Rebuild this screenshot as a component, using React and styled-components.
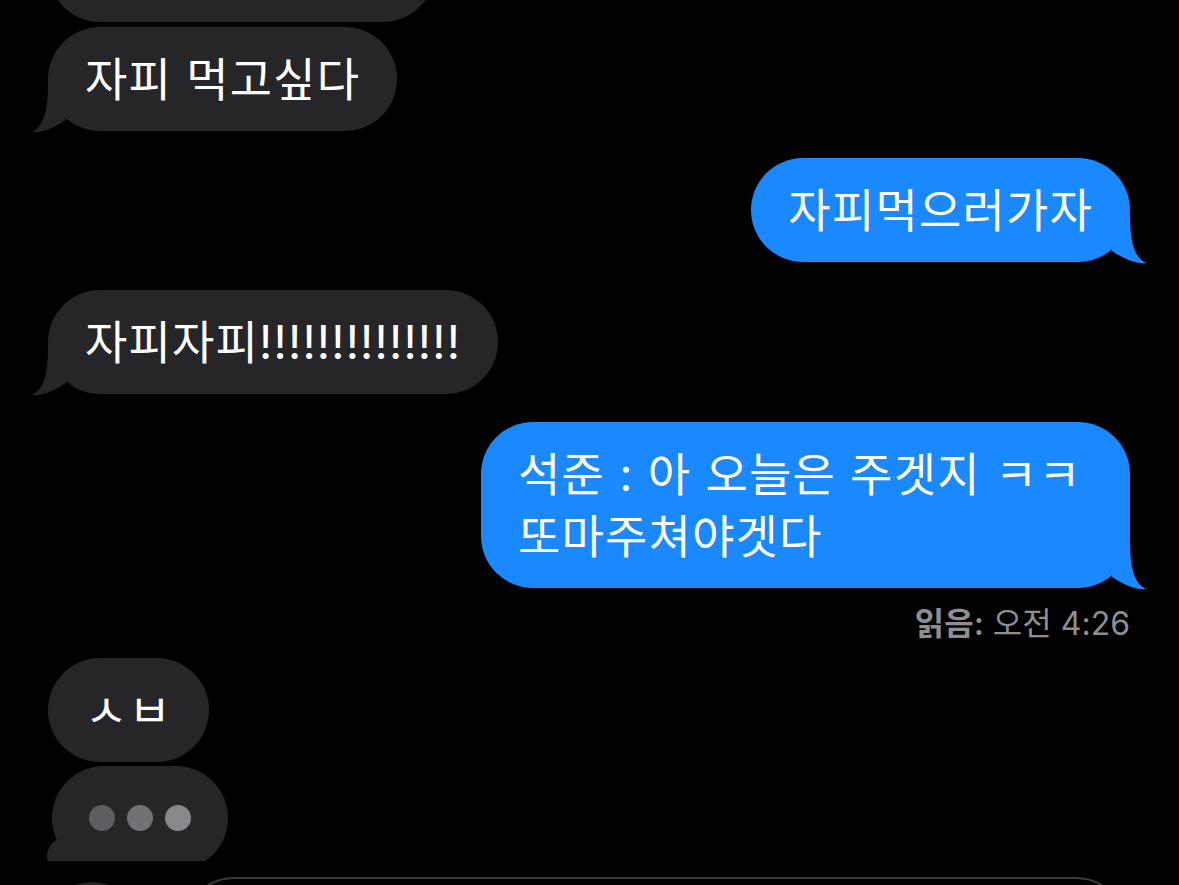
import styled, { createGlobalStyle } from 'styled-components';

const GlobalStyle = createGlobalStyle`
  html, body {
    margin: 0;
    background: #000;
  }
  body {
    font-family: Inter, "Noto Sans CJK KR", sans-serif;
  }
`;

const GRAY = '#262629';
const BLUE = '#1a88ff';

const Screen = styled.div`
  height: 885px;
  display: flex;
  flex-direction: column;
  background: #000;
  overflow: hidden;
`;

const Thread = styled.div`
  flex: 1;
  min-height: 0;
  overflow: hidden;
  display: flex;
  flex-direction: column;
  padding: 0 49px 0 48px;
`;

const Row = styled.div`
  flex-shrink: 0;
  display: flex;
  justify-content: ${p => (p.$mine ? 'flex-end' : 'flex-start')};
  margin-top: ${p => p.$gap || 0}px;
  padding-left: ${p => p.$indent || 0}px;
`;

const Bubble = styled.div`
  position: relative;
  box-sizing: border-box;
  width: ${p => (p.$width ? `${p.$width}px` : 'auto')};
  min-height: 104px;
  padding: 21px 37px;
  border-radius: 52px;
  background: ${p => (p.$mine ? BLUE : GRAY)};
  color: #fff;
  font-size: 46px;
  line-height: 62px;
  letter-spacing: 1.2px;
  white-space: nowrap;
`;

const Bang = styled.span`
  letter-spacing: 1.2px;
`;

const Tail = styled.svg`
  position: absolute;
  bottom: -1px;
  width: 40px;
  height: 50px;
  overflow: visible;
  ${p => (p.$side === 'right' ? 'right: -17px;' : 'left: -17px;')}
`;

const TypingBubble = styled.div`
  position: relative;
  box-sizing: border-box;
  width: 176px;
  height: 104px;
  border-radius: 52px;
  background: ${GRAY};
  display: flex;
  align-items: center;
  justify-content: center;
  gap: 12px;

  &::before {
    content: '';
    position: absolute;
    left: -5px;
    top: 72px;
    width: 36px;
    height: 36px;
    border-radius: 50%;
    background: ${GRAY};
  }
`;

const Dot = styled.span`
  position: relative;
  width: 26px;
  height: 26px;
  border-radius: 50%;
  background: ${p => p.$shade};
`;

const Receipt = styled.div`
  font-size: 32px;
  line-height: 40px;
  color: #8e8e93;
  white-space: nowrap;

  strong {
    font-weight: 600;
  }
`;

const InputBar = styled.div`
  flex-shrink: 0;
  height: 24px;
  display: flex;
  align-items: flex-start;
  padding-left: 42px;
  background: #000;
  overflow: hidden;
`;

const AppsButton = styled.div`
  flex-shrink: 0;
  width: 100px;
  height: 100px;
  margin-top: 21px;
  border-radius: 50%;
  background: #242426;
`;

const Field = styled.div`
  flex-shrink: 0;
  box-sizing: border-box;
  width: 942px;
  height: 100px;
  margin: 16px 0 0 42px;
  border: 2px solid #38383a;
  border-radius: 50px;
`;

function BubbleTail({ side, color }) {
  const right = side === 'right';
  return (
    <Tail
      $side={side}
      viewBox={right ? '-23 -49 40 50' : '-17 -49 40 50'}
    >
      <path
        fill={color}
        d={
          right
            ? 'M0,-48 C0,-20 4,-5 16,1 C6,2 -6,-3 -18,-11 L-20,-48 Z'
            : 'M0,-48 C0,-20 -4,-5 -16,1 C-6,2 6,-3 18,-11 L20,-48 Z'
        }
      />
    </Tail>
  );
}

function Message({ mine, tail, gap, width, children }) {
  return (
    <Row $mine={mine} $gap={gap}>
      <Bubble $mine={mine} $width={width}>
        {children}
        {tail && <BubbleTail side={mine ? 'right' : 'left'} color={mine ? BLUE : GRAY} />}
      </Bubble>
    </Row>
  );
}

export default function App() {
  return (
    <>
      <GlobalStyle />
      <Screen>
        <Thread>
          {/* previous message, scrolled mostly out of view */}
          <Row $gap={-82}>
            <Bubble $width={387} />
          </Row>
          <Message tail gap={5}>자피 먹고싶다</Message>
          <Message mine tail gap={27}>자피먹으러가자</Message>
          <Message tail gap={28}>
            자피자피<Bang>!!!!!!!!!!!!!!</Bang>
          </Message>
          <Message mine tail gap={28} width={649}>
            석준 : 아 오늘은 주겟지 ㅋㅋ
            <br />
            또마주쳐야겟다
          </Message>
          <Row $mine $gap={16}>
            <Receipt>
              <strong>읽음:</strong> 오전 4:26
            </Receipt>
          </Row>
          <Message gap={14}>ㅅㅂ</Message>
          <Row $gap={4} $indent={4}>
            <TypingBubble>
              <Dot $shade="#5e5e62" />
              <Dot $shade="#727276" />
              <Dot $shade="#88888c" />
            </TypingBubble>
          </Row>
        </Thread>
        <InputBar>
          <AppsButton />
          <Field />
        </InputBar>
      </Screen>
    </>
  );
}
